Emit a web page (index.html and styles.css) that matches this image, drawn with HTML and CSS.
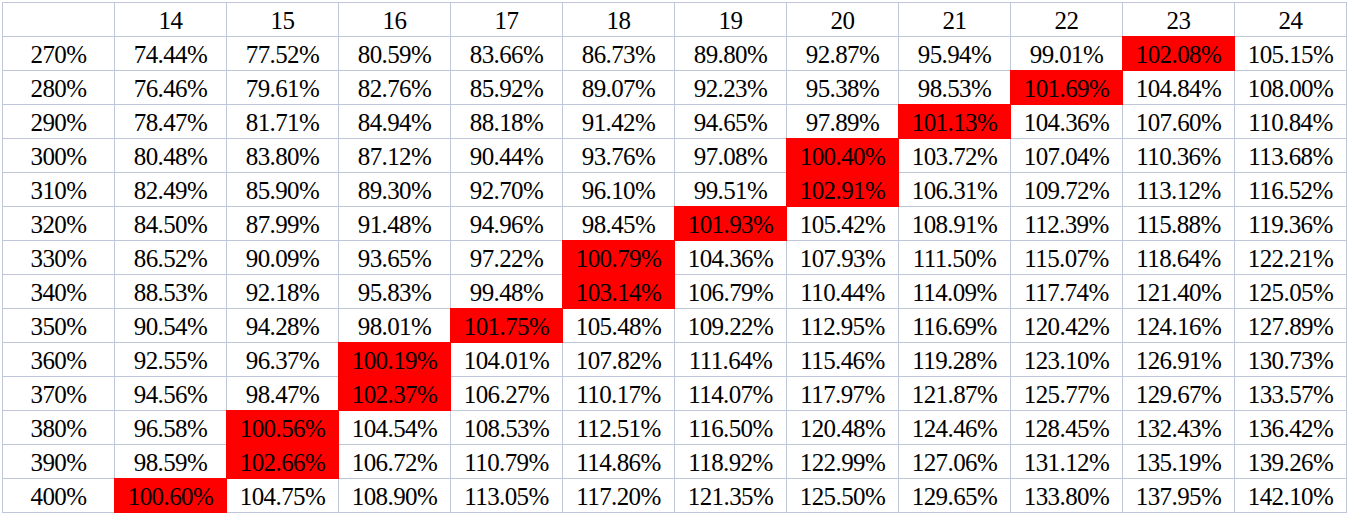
FILE: index.html
```html
<!DOCTYPE html>
<html>
<head>
<meta charset="utf-8">
<link rel="stylesheet" href="styles.css">
</head>
<body>
<div class="sheet">
<div class="c"></div><div class="c">14</div><div class="c">15</div><div class="c">16</div><div class="c">17</div><div class="c">18</div><div class="c">19</div><div class="c">20</div><div class="c">21</div><div class="c">22</div><div class="c">23</div><div class="c">24</div>
<div class="c">270%</div><div class="c">74.44%</div><div class="c">77.52%</div><div class="c">80.59%</div><div class="c">83.66%</div><div class="c">86.73%</div><div class="c">89.80%</div><div class="c">92.87%</div><div class="c">95.94%</div><div class="c">99.01%</div><div class="c hot">102.08%</div><div class="c">105.15%</div>
<div class="c">280%</div><div class="c">76.46%</div><div class="c">79.61%</div><div class="c">82.76%</div><div class="c">85.92%</div><div class="c">89.07%</div><div class="c">92.23%</div><div class="c">95.38%</div><div class="c">98.53%</div><div class="c hot">101.69%</div><div class="c">104.84%</div><div class="c">108.00%</div>
<div class="c">290%</div><div class="c">78.47%</div><div class="c">81.71%</div><div class="c">84.94%</div><div class="c">88.18%</div><div class="c">91.42%</div><div class="c">94.65%</div><div class="c">97.89%</div><div class="c hot">101.13%</div><div class="c">104.36%</div><div class="c">107.60%</div><div class="c">110.84%</div>
<div class="c">300%</div><div class="c">80.48%</div><div class="c">83.80%</div><div class="c">87.12%</div><div class="c">90.44%</div><div class="c">93.76%</div><div class="c">97.08%</div><div class="c hot">100.40%</div><div class="c">103.72%</div><div class="c">107.04%</div><div class="c">110.36%</div><div class="c">113.68%</div>
<div class="c">310%</div><div class="c">82.49%</div><div class="c">85.90%</div><div class="c">89.30%</div><div class="c">92.70%</div><div class="c">96.10%</div><div class="c">99.51%</div><div class="c hot">102.91%</div><div class="c">106.31%</div><div class="c">109.72%</div><div class="c">113.12%</div><div class="c">116.52%</div>
<div class="c">320%</div><div class="c">84.50%</div><div class="c">87.99%</div><div class="c">91.48%</div><div class="c">94.96%</div><div class="c">98.45%</div><div class="c hot">101.93%</div><div class="c">105.42%</div><div class="c">108.91%</div><div class="c">112.39%</div><div class="c">115.88%</div><div class="c">119.36%</div>
<div class="c">330%</div><div class="c">86.52%</div><div class="c">90.09%</div><div class="c">93.65%</div><div class="c">97.22%</div><div class="c hot">100.79%</div><div class="c">104.36%</div><div class="c">107.93%</div><div class="c">111.50%</div><div class="c">115.07%</div><div class="c">118.64%</div><div class="c">122.21%</div>
<div class="c">340%</div><div class="c">88.53%</div><div class="c">92.18%</div><div class="c">95.83%</div><div class="c">99.48%</div><div class="c hot">103.14%</div><div class="c">106.79%</div><div class="c">110.44%</div><div class="c">114.09%</div><div class="c">117.74%</div><div class="c">121.40%</div><div class="c">125.05%</div>
<div class="c">350%</div><div class="c">90.54%</div><div class="c">94.28%</div><div class="c">98.01%</div><div class="c hot">101.75%</div><div class="c">105.48%</div><div class="c">109.22%</div><div class="c">112.95%</div><div class="c">116.69%</div><div class="c">120.42%</div><div class="c">124.16%</div><div class="c">127.89%</div>
<div class="c">360%</div><div class="c">92.55%</div><div class="c">96.37%</div><div class="c hot">100.19%</div><div class="c">104.01%</div><div class="c">107.82%</div><div class="c">111.64%</div><div class="c">115.46%</div><div class="c">119.28%</div><div class="c">123.10%</div><div class="c">126.91%</div><div class="c">130.73%</div>
<div class="c">370%</div><div class="c">94.56%</div><div class="c">98.47%</div><div class="c hot">102.37%</div><div class="c">106.27%</div><div class="c">110.17%</div><div class="c">114.07%</div><div class="c">117.97%</div><div class="c">121.87%</div><div class="c">125.77%</div><div class="c">129.67%</div><div class="c">133.57%</div>
<div class="c">380%</div><div class="c">96.58%</div><div class="c hot">100.56%</div><div class="c">104.54%</div><div class="c">108.53%</div><div class="c">112.51%</div><div class="c">116.50%</div><div class="c">120.48%</div><div class="c">124.46%</div><div class="c">128.45%</div><div class="c">132.43%</div><div class="c">136.42%</div>
<div class="c">390%</div><div class="c">98.59%</div><div class="c hot">102.66%</div><div class="c">106.72%</div><div class="c">110.79%</div><div class="c">114.86%</div><div class="c">118.92%</div><div class="c">122.99%</div><div class="c">127.06%</div><div class="c">131.12%</div><div class="c">135.19%</div><div class="c">139.26%</div>
<div class="c">400%</div><div class="c hot">100.60%</div><div class="c">104.75%</div><div class="c">108.90%</div><div class="c">113.05%</div><div class="c">117.20%</div><div class="c">121.35%</div><div class="c">125.50%</div><div class="c">129.65%</div><div class="c">133.80%</div><div class="c">137.95%</div><div class="c">142.10%</div>
</div>
</body>
</html>
```
FILE: styles.css
```css
html, body {
  margin: 0;
  padding: 0;
  background: #ffffff;
  overflow: hidden;
}
.sheet {
  margin: 2px 0 0 2px;
  display: grid;
  grid-template-columns: repeat(12, 111px);
  grid-auto-rows: 33px;
  gap: 1px;
  padding: 1px;
  width: max-content;
  background: #c0c7db;
  font-family: "Liberation Serif", "Times New Roman", serif;
  font-size: 25px;
  letter-spacing: -0.6px;
  color: #000000;
}
.c {
  background: #ffffff;
  box-sizing: border-box;
  height: 33px;
  padding-top: 3px;
  line-height: 30px;
  text-align: center;
  white-space: nowrap;
}
.hot {
  background: #ff0000;
  box-shadow: 0 0 0 1px #ff0000;
}
```
